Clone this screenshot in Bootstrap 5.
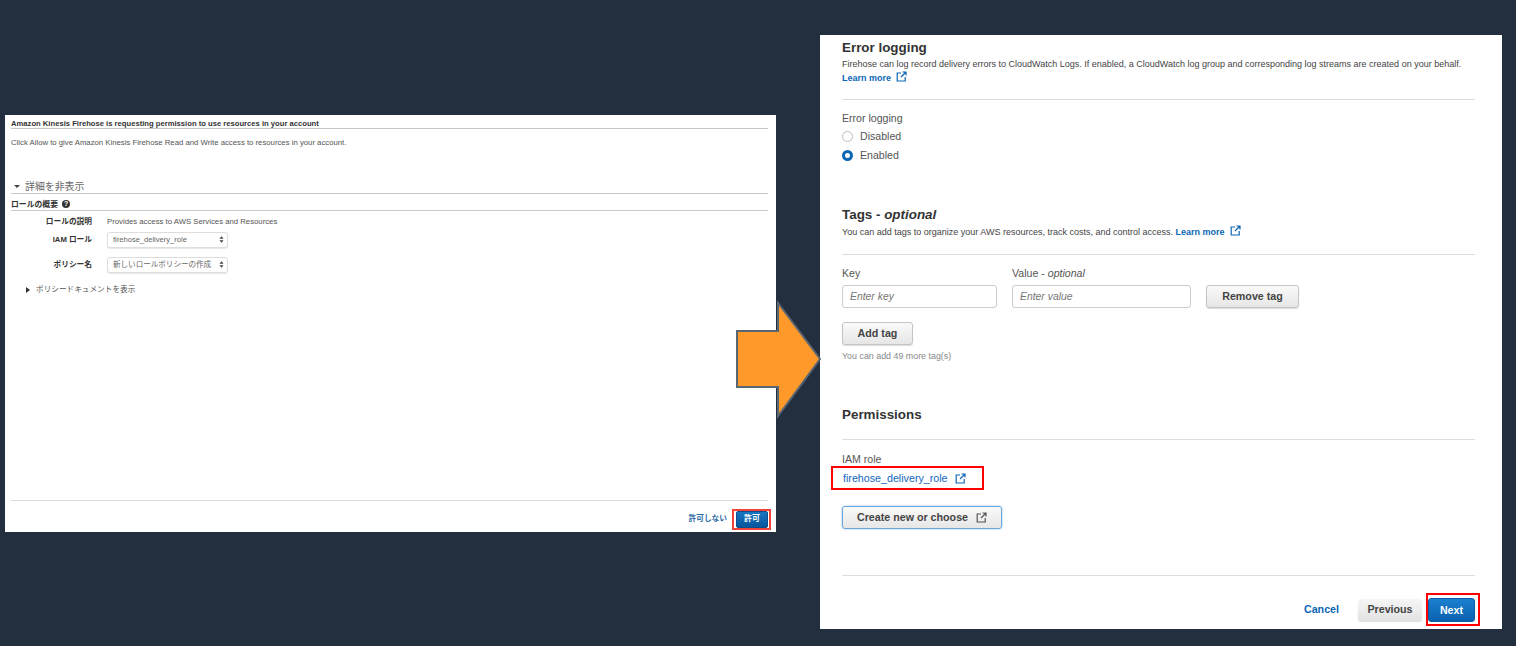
<!DOCTYPE html>
<html lang="en">
<head>
<meta charset="utf-8">
<title>Firehose permissions</title>
<link href="https://cdn.jsdelivr.net/npm/bootstrap@5.3.0/dist/css/bootstrap.min.css" rel="stylesheet">
<style>
html,body{height:646px;overflow:hidden}
body{background:#232f3e;font-family:"Liberation Sans","Noto Sans CJK JP",sans-serif;color:#444}
.stage{position:relative;height:646px;padding-left:5px}
.pane-left{width:771px;height:417px;margin-top:115px;background:#fff;padding:0 8px 0 6px}
.pane-right{width:682px;height:594px;margin-top:35px;margin-left:44px;background:#fff;padding:0 27px 0 22px}
.flow-arrow{position:absolute;left:735px;top:301px;width:88px;height:118px}
/* left pane */
.l-title{font-size:7.65px;font-weight:700;line-height:10px;padding-top:4px;height:14px;border-bottom:1px solid #c8c8c8;color:#333}
.l-text{font-size:7.75px;line-height:10px;margin-top:9px;color:#555}
.l-disc{font-size:9.9px;line-height:13px;margin-top:31px;height:15px;border-bottom:1px solid #c8c8c8;color:#666;display:flex;align-items:center;gap:5px;padding-left:3px}
.tri-d{width:0;height:0;border-left:3px solid transparent;border-right:3px solid transparent;border-top:3px solid #444}
.tri-r{width:0;height:0;border-top:3px solid transparent;border-bottom:3px solid transparent;border-left:4px solid #333}
.l-sum{font-size:7.85px;font-weight:700;line-height:10px;margin-top:6px;height:11px;border-bottom:1px solid #c8c8c8;display:flex;gap:4px;color:#333}
.qmark{width:8px;height:8px;border-radius:50%;background:#333;color:#fff;font-size:7px;line-height:8px;text-align:center}
.l-row{display:flex;align-items:center;font-size:7.75px;color:#555}
.l-row dt{width:81px;text-align:right;font-weight:700;margin:0;color:#333;font-size:7.7px}
.l-row dd{margin:0 0 0 15px}
.l-sel{width:121px;height:16px;font-size:7.55px;line-height:14px;padding:0 10px 0 5px;background-image:url("data:image/svg+xml,%3Csvg xmlns='http://www.w3.org/2000/svg' viewBox='0 0 6 8'%3E%3Cpath d='M3 0 5.500 3H.5ZM3 8 .5 5h5Z' fill='%23444'/%3E%3C/svg%3E");background-position:right 3px center;background-size:5px 7px;border-color:#ddd;border-radius:3px;color:#666;box-shadow:0 1px 1px #e8e8e8}
.l-doc{font-size:7.65px;line-height:10px;margin-top:12px;padding-left:15px;display:flex;align-items:center;gap:6px;color:#555}
.l-foot{margin-top:205px;border-top:1px solid #ddd;display:flex;justify-content:flex-end;align-items:center;padding-top:8px;gap:5px}
.l-deny{font-size:7.7px;font-weight:700;color:#2b6ca8;text-decoration:none}
.hl-l{border:2px solid #f0443a;width:39px;height:21px;padding:0 1px 0 2px;margin-right:-3px}
.l-allow{display:block;width:100%;height:100%;padding:0;font-size:8px;font-weight:700;line-height:1;color:#fff;background:linear-gradient(#1577c0,#0a559c);border:1px solid #0a4f8f;border-radius:2px}
/* right pane */
.r-h{font-size:13.4px;font-weight:700;line-height:16px;color:#333;margin:0}
.r-desc{font-size:9px;line-height:13px;color:#444}
.r-link{font-weight:700;color:#0b66b5;text-decoration:none}
.ext{display:inline-block;vertical-align:-1px;margin-left:5px}
.r-rule{border-top:1px solid #ddd;opacity:1;margin:0}
.r-lab{font-size:10.6px;line-height:13px;color:#555}
.r-radio{display:flex;align-items:center;gap:7px;min-height:0;margin:0;padding:0;font-size:10.6px;line-height:13px;color:#555}
.r-radio .form-check-input{float:none;margin:0;width:11px;height:11px;border-color:#bbb}
.r-radio .form-check-input:checked{background-color:#fff;border:3px solid #0b66b5;background-image:none}
.r-input{height:23px;font-size:10.4px;font-style:italic;padding:0 7px;border-color:#ccc;border-radius:3px}
.r-input::placeholder{color:#777}
.r-btn{height:23px;padding:0;font-size:10.7px;font-weight:700;color:#444;background:linear-gradient(#fafafa,#e6e6e6);border:1px solid #c4c4c4;border-radius:3px;box-shadow:0 1px 1px #ddd;line-height:1}
.r-hint{font-size:8.9px;line-height:11px;color:#888}
.hl-iam{border:2px solid #f00;width:153px;height:24px;margin-left:-11px;display:flex;align-items:center;padding-left:10px;font-size:10.7px;color:#1166bb;gap:7px}
.hl-next{border:2px solid #f00;width:54px;height:33px;padding:3px 3px 2px 0;margin-left:4px}
.r-next{display:block;width:100%;height:100%;padding:0;font-size:10.7px;font-weight:700;color:#fff;background:linear-gradient(#1a80cf,#0a62b0);border:1px solid #0a5ca5;border-radius:3px;line-height:1}
</style>
</head>
<body>
<div class="stage d-flex align-items-start">
  <section class="pane-left">
    <div class="l-title">Amazon Kinesis Firehose is requesting permission to use resources in your account</div>
    <p class="l-text mb-0">Click Allow to give Amazon Kinesis Firehose Read and Write access to resources in your account.</p>
    <div class="l-disc"><span class="tri-d"></span><span>詳細を非表示</span></div>
    <div class="l-sum"><span>ロールの概要</span><span class="qmark">?</span></div>
    <dl class="mb-0">
      <div class="l-row" style="margin-top:5px"><dt>ロールの説明</dt><dd>Provides access to AWS Services and Resources</dd></div>
      <div class="l-row" style="margin-top:4px"><dt>IAM ロール</dt><dd><select class="form-select l-sel"><option>firehose_delivery_role</option></select></dd></div>
      <div class="l-row" style="margin-top:9px"><dt>ポリシー名</dt><dd><select class="form-select l-sel"><option>新しいロールポリシーの作成</option></select></dd></div>
    </dl>
    <div class="l-doc"><span class="tri-r"></span><span>ポリシードキュメントを表示</span></div>
    <div class="l-foot">
      <a class="l-deny" href="#">許可しない</a>
      <div class="hl-l"><button type="button" class="btn l-allow">許可</button></div>
    </div>
  </section>

  <section class="pane-right">
    <h2 class="r-h" style="margin-top:5px">Error logging</h2>
    <p class="r-desc mb-0" style="margin-top:2px">Firehose can log record delivery errors to CloudWatch Logs. If enabled, a CloudWatch log group and corresponding log streams are created on your behalf.<br><a class="r-link" href="#">Learn more<svg class="ext" width="11" height="11" viewBox="0 0 11 11" fill="none" stroke="#0b66b5" stroke-width="1.2"><path d="M5 2H1.200v8h8V6M6.500 1H10v3.500M10 1 5 6"/></svg></a></p>
    <hr class="r-rule" style="margin-top:14px">
    <div class="r-lab" style="margin-top:12px">Error logging</div>
    <div class="form-check r-radio" style="margin-top:5px"><input class="form-check-input" type="radio" name="e" id="d"><label for="d">Disabled</label></div>
    <div class="form-check r-radio" style="margin-top:6px"><input class="form-check-input" type="radio" name="e" id="n" checked><label for="n">Enabled</label></div>

    <h2 class="r-h" style="margin-top:45px">Tags - <em>optional</em></h2>
    <p class="r-desc mb-0" style="margin-top:2px">You can add tags to organize your AWS resources, track costs, and control access. <a class="r-link" href="#">Learn more<svg class="ext" width="11" height="11" viewBox="0 0 11 11" fill="none" stroke="#0b66b5" stroke-width="1.2"><path d="M5 2H1.200v8h8V6M6.500 1H10v3.500M10 1 5 6"/></svg></a></p>
    <hr class="r-rule" style="margin-top:15px">
    <div class="d-flex align-items-end" style="margin-top:12px">
      <div style="width:155px"><div class="r-lab" style="margin-bottom:5px">Key</div><input class="form-control r-input" placeholder="Enter key"></div>
      <div style="width:179px;margin-left:15px"><div class="r-lab" style="margin-bottom:5px">Value - <em>optional</em></div><input class="form-control r-input" placeholder="Enter value"></div>
      <button type="button" class="btn r-btn" style="width:93px;margin-left:15px">Remove tag</button>
    </div>
    <button type="button" class="btn r-btn d-block" style="width:71px;margin-top:14px">Add tag</button>
    <div class="r-hint" style="margin-top:6px">You can add 49 more tag(s)</div>

    <h2 class="r-h" style="margin-top:45px">Permissions</h2>
    <hr class="r-rule" style="margin-top:16px">
    <div class="r-lab" style="margin-top:13px">IAM role</div>
    <div class="hl-iam"><span>firehose_delivery_role</span><svg width="11" height="11" viewBox="0 0 11 11" fill="none" stroke="#1166bb" stroke-width="1.2"><path d="M5 2H1.200v8h8V6M6.500 1H10v3.500M10 1 5 6"/></svg></div>
    <button type="button" class="btn r-btn d-flex align-items-center justify-content-center gap-2" style="width:160px;margin-top:16px;border-color:#6aa6dc;box-shadow:0 0 2px #7db4e6">Create new or choose <svg width="11" height="11" viewBox="0 0 11 11" fill="none" stroke="#555" stroke-width="1.2"><path d="M5 2H1.200v8h8V6M6.500 1H10v3.500M10 1 5 6"/></svg></button>
    <hr class="r-rule" style="margin-top:46px">
    <div class="d-flex justify-content-end align-items-center" style="margin-top:17px;margin-right:-5px">
      <a class="r-link" style="font-size:10.7px;margin-right:19px" href="#">Cancel</a>
      <button type="button" class="btn r-btn" style="width:64px;height:22px;border:0;background:linear-gradient(#f6f6f6,#e2e2e2)">Previous</button>
      <div class="hl-next"><button type="button" class="btn r-next">Next</button></div>
    </div>
  </section>

  <svg class="flow-arrow" viewBox="0 0 88 118" aria-hidden="true"><path d="M2 30H43V2L85 58 43 115V86H2Z" fill="#ff9a2a" stroke="#5a6672" stroke-width="2"/></svg>
</div>
<script src="https://cdn.jsdelivr.net/npm/bootstrap@5.3.0/dist/js/bootstrap.bundle.min.js"></script>
</body>
</html>
